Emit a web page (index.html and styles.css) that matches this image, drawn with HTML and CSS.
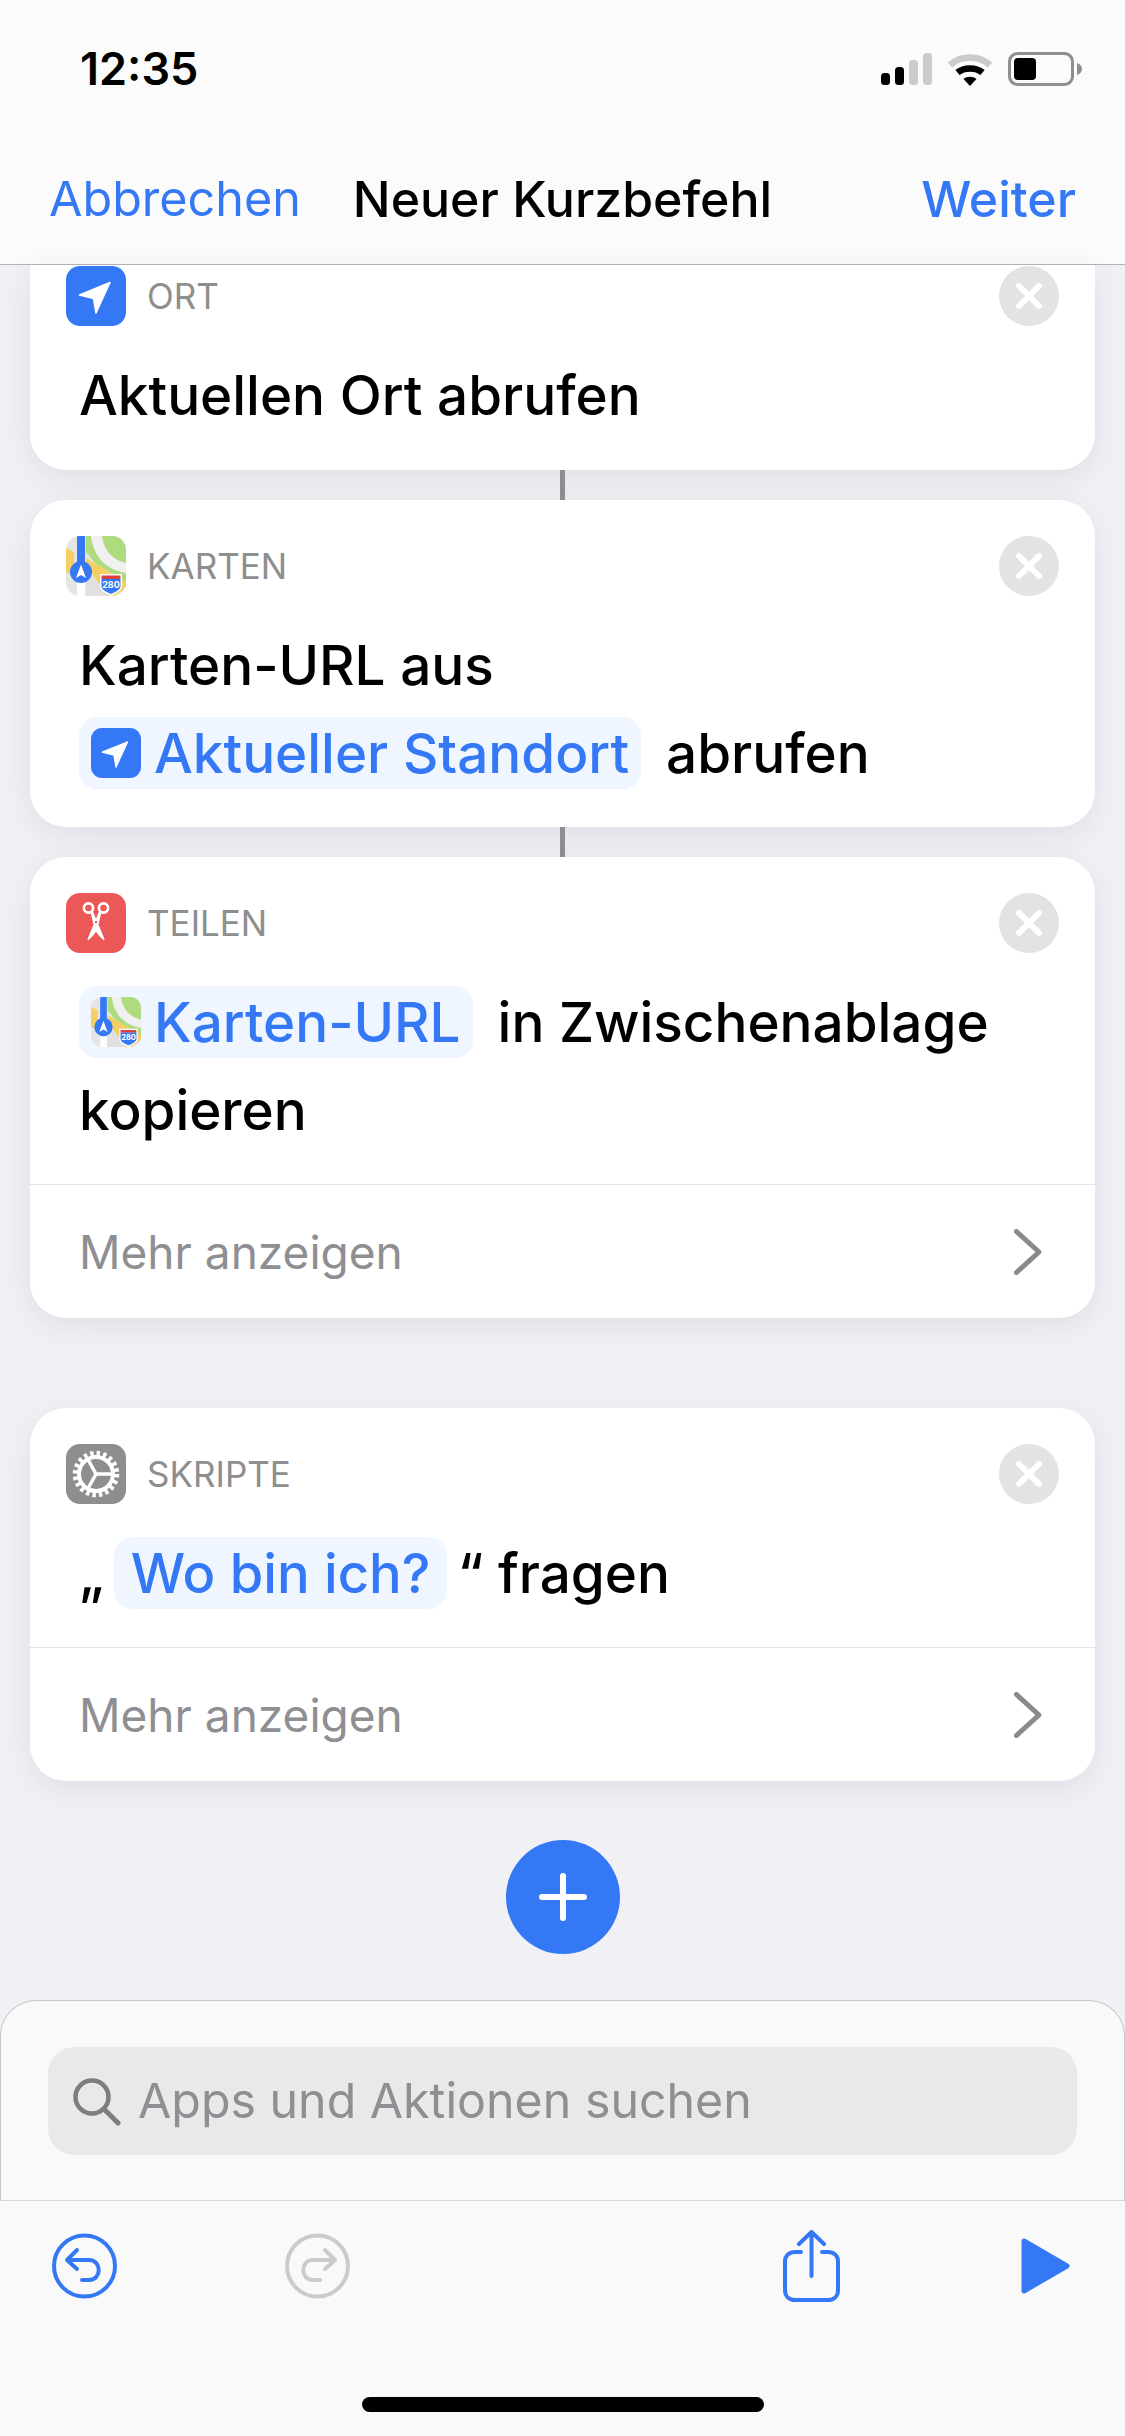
FILE: index.html
```html
<!DOCTYPE html>
<html lang="de">
<head>
<meta charset="utf-8" />
<title>Neuer Kurzbefehl</title>
<link rel="stylesheet" href="styles.css">
</head>
<body>

<svg class="defs" aria-hidden="true">
	<symbol id="i-location" viewBox="0 0 60 60">
		<path d="M44 16.5 13.5 29 27.5 32.5 30 47Z" fill="#fff" stroke="#fff" stroke-width="1.5" stroke-linejoin="round" />
	</symbol>
	<symbol id="i-maps" viewBox="0 0 60 60">
		<rect width="60" height="60" fill="#e5e5e5" />
		<path d="M20 0H60V46L20 22Z" fill="#aedb7d" />
		<path d="M36 0C38 14 46 24 60 27V37C40 34 27 20 25 0Z" fill="#f0f0f0" />
		<path d="M0 14 20 26 48 60H60V48L44 48 22 18 0 6Z" fill="#e5e5e5" />
		<path d="M0 12 8 16V40L0 36Z" fill="#f6cf63" />
		<path d="M20 22 60 46V52L48 60H42L20 30Z" fill="#f6cf63" />
		<path d="M20 30 42 60H20Z" fill="#e0e0e0" />
		<rect x="11" y="30" width="8" height="30" fill="#fff" />
		<rect x="11" y="0" width="8" height="32" fill="#3478f6" />
		<circle cx="15" cy="36" r="11" fill="#3478f6" />
		<path d="M15 28.5 20 42 15 39 10 42Z" fill="#fff" />
		<path d="M34 38H56V50C56 55 50 57 45 60 40 57 34 55 34 50Z" fill="#fff" />
		<path d="M35.5 39.5H54.5V43H35.5Z" fill="#d9433f" />
		<path d="M35.5 43H54.5V50C54.5 54 49 56 45 58 41 56 35.5 54 35.5 50Z" fill="#3478f6" />
	</symbol>
	<symbol id="i-scissors" viewBox="0 0 60 60">
		<g fill="none" stroke="#fff" stroke-width="2.6">
			<circle cx="22.5" cy="15" r="4.6" />
			<circle cx="37.5" cy="15" r="4.6" />
		</g>
		<path d="M24.500 19.500 27 18.500 38.500 46 38 47.500C34 44 31 41 29 37Z" fill="#fff" />
		<path d="M35.500 19.500 33 18.500 21.500 46 22 47.500C26 44 29 41 31 37Z" fill="#fff" />
		<circle cx="30" cy="29" r="1.2" fill="#ec5858" />
	</symbol>
	<symbol id="i-gear" viewBox="0 0 60 60">
		<g fill="none" stroke="#fff">
			<circle cx="30" cy="30" r="20.5" stroke-width="5.5" stroke-dasharray="3.4 3.04" />
			<circle cx="30" cy="30" r="17" stroke-width="4" />
			<path d="M30 30H47M30 30 22 15.500M30 30 22 44.500" stroke-width="3.5" />
		</g>
	</symbol>
	<symbol id="i-close" viewBox="0 0 60 60">
		<circle cx="30" cy="30" r="30" fill="#e3e3e6" />
		<path d="M20 20 40 40M40 20 20 40" fill="none" stroke="#fff" stroke-width="6" stroke-linecap="round" />
	</symbol>
	<symbol id="i-chevron" viewBox="0 0 28 46">
		<path d="M2.5 2.5 25 23 2.5 43.5" fill="none" stroke="#8a8a8e" stroke-width="5" stroke-linecap="round" stroke-linejoin="round" />
	</symbol>
</svg>

<div class="phone">

	<header class="topbar">
		<div class="status">
			<span class="clock">12:35</span>
			<div class="status_icons">
				<svg class="st_signal" width="51" height="32" viewBox="0 0 51 32">
					<rect x="0" y="20" width="9" height="12" rx="3.5" fill="#000" />
					<rect x="14" y="14" width="9" height="18" rx="3.5" fill="#000" />
					<rect x="28" y="7" width="9" height="25" rx="3.5" fill="#cbcbcb" />
					<rect x="42" y="0" width="9" height="32" rx="3.5" fill="#cbcbcb" />
				</svg>
				<svg class="st_wifi" width="46" height="33" viewBox="0 0 46 33">
					<path d="M3 12C14 2 32 2 43 12" fill="none" stroke="#cbcbcb" stroke-width="6.5" />
					<path d="M10.5 19.5C17 14 29 14 35.5 19.5" fill="none" stroke="#000" stroke-width="6.5" />
					<path d="M16.5 26C20 23 26 23 29.500 26L23 33Z" fill="#000" />
				</svg>
				<svg class="st_battery" width="74" height="34" viewBox="0 0 74 34">
					<rect x="1.500" y="1.500" width="63" height="31" rx="8" fill="none" stroke="#8e8e8e" stroke-width="3" />
					<rect x="6" y="6" width="22" height="22" rx="4" fill="#000" />
					<path d="M69 11C72 12 74 14 74 17 74 20 72 22 69 23Z" fill="#8e8e8e" />
				</svg>
			</div>
		</div>
		<nav class="navrow">
			<a class="nav_left">Abbrechen</a>
			<span class="nav_title">Neuer Kurzbefehl</span>
			<a class="nav_right">Weiter</a>
		</nav>
	</header>

	<main class="actions">

		<section class="card card_clipped">
			<div class="card_head">
				<svg class="app_icon icon_blue"><use href="#i-location" /></svg>
				<span class="card_label">ORT</span>
				<svg class="close_btn"><use href="#i-close" /></svg>
			</div>
			<div class="card_body body_roomy">
				<div class="line"><span>Aktuellen Ort abrufen</span></div>
			</div>
		</section>

		<div class="connector"></div>

		<section class="card">
			<div class="card_head">
				<svg class="app_icon" viewBox="0 0 60 60">
					<use href="#i-maps" />
					<text class="shield_text" x="45" y="51.5">280</text>
				</svg>
				<span class="card_label">KARTEN</span>
				<svg class="close_btn"><use href="#i-close" /></svg>
			</div>
			<div class="card_body">
				<div class="line"><span>Karten-URL aus</span></div>
				<div class="line">
					<span class="token">
						<svg class="token_icon icon_blue"><use href="#i-location" /></svg>
						Aktueller Standort
					</span>
					<span>abrufen</span>
				</div>
			</div>
		</section>

		<div class="connector"></div>

		<section class="card">
			<div class="card_head">
				<svg class="app_icon icon_red"><use href="#i-scissors" /></svg>
				<span class="card_label">TEILEN</span>
				<svg class="close_btn"><use href="#i-close" /></svg>
			</div>
			<div class="card_body">
				<div class="line">
					<span class="token">
						<svg class="token_icon" viewBox="0 0 60 60">
							<use href="#i-maps" />
							<text class="shield_text" x="45" y="51.5">280</text>
						</svg>
						Karten-URL
					</span>
					<span>in Zwischenablage</span>
				</div>
				<div class="line"><span>kopieren</span></div>
			</div>
			<div class="card_more">
				<span>Mehr anzeigen</span>
				<svg class="chevron"><use href="#i-chevron" /></svg>
			</div>
		</section>

		<section class="card card_apart">
			<div class="card_head">
				<svg class="app_icon icon_gray"><use href="#i-gear" /></svg>
				<span class="card_label">SKRIPTE</span>
				<svg class="close_btn"><use href="#i-close" /></svg>
			</div>
			<div class="card_body">
				<div class="line line_tight">
					<span>„</span>
					<span class="token token_plain">Wo bin ich?</span>
					<span>“ fragen</span>
				</div>
			</div>
			<div class="card_more">
				<span>Mehr anzeigen</span>
				<svg class="chevron"><use href="#i-chevron" /></svg>
			</div>
		</section>

		<button class="add_btn" aria-label="Hinzufügen">
			<svg width="52" height="52" viewBox="0 0 52 52">
				<path d="M26 5V47M5 26H47" fill="none" stroke="#fff" stroke-width="6" stroke-linecap="round" />
			</svg>
		</button>

	</main>

	<section class="search_panel">
		<div class="search_field">
			<svg width="50" height="50" viewBox="0 0 50 50">
				<circle cx="21" cy="21" r="16.5" fill="none" stroke="#7d7d82" stroke-width="4.5" />
				<path d="M33 33 47 47" fill="none" stroke="#7d7d82" stroke-width="5" stroke-linecap="round" />
			</svg>
			<span>Apps und Aktionen suchen</span>
		</div>
	</section>

	<footer class="toolbar">
		<div class="tool_row">
			<svg class="tool_undo" width="65" height="72" viewBox="0 0 65 72">
				<g fill="none" stroke="#3478f6" stroke-linecap="round" stroke-linejoin="round">
					<circle cx="32.500" cy="36" r="30.500" stroke-width="4" />
					<path d="M25 20 15 30 25 39M15 30H37C50 30 50 50 37 50H30" stroke-width="4" />
				</g>
			</svg>
			<svg class="tool_redo" width="65" height="72" viewBox="0 0 65 72">
				<g fill="none" stroke="#cbcbcb" stroke-linecap="round" stroke-linejoin="round">
					<circle cx="32.500" cy="36" r="30.500" stroke-width="4" />
					<path d="M40 20 50 30 40 39M50 30H28C15 30 15 50 28 50H35" stroke-width="4" />
				</g>
			</svg>
			<svg class="tool_share" width="57" height="72" viewBox="0 0 57 72">
				<g fill="none" stroke="#3478f6" stroke-linecap="round" stroke-linejoin="round" stroke-width="4">
					<path d="M18 22H12C6 22 2 26 2 31V60C2 66 6 70 12 70H45C51 70 55 66 55 60V31C55 26 51 22 45 22H39" />
					<path d="M28.500 46V3M16 14 28.500 2 41 14" />
				</g>
			</svg>
			<svg class="tool_play" width="49" height="56" viewBox="0 0 49 56">
				<path d="M3 3 46 28 3 53Z" fill="#3478f6" stroke="#3478f6" stroke-width="5" stroke-linejoin="round" />
			</svg>
		</div>
		<div class="home_bar"></div>
	</footer>

</div>

</body>
</html>
```

FILE: styles.css
```css
:root {
	--blue       : #3478f6;
	--label-gray : #8e8e93;
	--page-bg    : #f0f0f5;
	--bar-bg     : #f9f9fa;
}
* {
	box-sizing : border-box;
}
body {
	margin      : 0;
	background  : var(--page-bg);
	font-family : Inter, "Liberation Sans", sans-serif;
	color       : #000;
}
.defs {
	position : absolute;
	width    : 0;
	height   : 0;
}
.phone {
	display        : flex;
	flex-direction : column;
	width          : 1125px;
	height         : 2436px;
	overflow       : hidden;
}

/* top */
.topbar {
	flex          : 0 0 265px;
	background    : #fbfbfb;
	border-bottom : 1px solid #b4b4b6;
}
.status {
	display         : flex;
	justify-content : space-between;
	align-items     : flex-start;
	padding         : 46px 43px 0 80px;
}
.clock {
	font-size   : 45px;
	font-weight : 600;
	line-height : 46px;
}
.status_icons {
	display     : flex;
	align-items : center;
	gap         : 15px;
	padding-top : 6px;
}
.navrow {
	display               : grid;
	grid-template-columns : 1fr auto 1fr;
	align-items           : center;
	padding               : 77px 49px 0 49px;
	font-size             : 48.5px;
	line-height           : 60px;
}
.nav_left, .nav_right {
	color : var(--blue);
}
.nav_right {
	text-align  : right;
	font-size   : 50px;
	font-weight : 500;
}
.nav_title {
	font-size   : 50px;
	font-weight : 500;
}

/* cards */
.actions {
	flex           : 1 1 auto;
	display        : flex;
	flex-direction : column;
	min-height     : 0;
	padding        : 0 30px;
}
.card {
	background    : #fff;
	border-radius : 36px;
	box-shadow    : 0 8px 30px rgba(60, 60, 80, 0.09);
	padding-top   : 36px;
}
.card_clipped {
	padding-top   : 1px;
	border-radius : 0 0 36px 36px;
}
.card_apart {
	margin-top : 90px;
}
.card_head {
	display     : flex;
	align-items : center;
	padding     : 0 36px;
}
.app_icon {
	width         : 60px;
	height        : 60px;
	border-radius : 14px;
	flex          : none;
}
.icon_blue { background : var(--blue); }
.icon_red  { background : #ec5858; }
.icon_gray { background : #8e8e8e; }
.card_label {
	margin-left : 21px;
	font-size   : 35px;
	color       : #8e8e8e;
}
.close_btn {
	width       : 60px;
	height      : 60px;
	margin-left : auto;
}
.card_body {
	padding : 25px 36px 30px 49px;
}
.body_roomy {
	padding-bottom : 31px;
}
.line {
	display     : flex;
	align-items : center;
	gap         : 25px;
	height      : 88px;
	font-size   : 54.8px;
	font-weight : 450;
	white-space : nowrap;
}
.line_tight {
	gap : 10px;
}
.token {
	display       : flex;
	align-items   : center;
	gap           : 13px;
	height        : 72px;
	padding       : 0 12px;
	border-radius : 18px;
	background    : #f0f6ff;
	color         : var(--blue);
}
.token_plain {
	padding   : 0 17px;
	font-size : 54.3px;
}
.token_icon {
	width         : 50px;
	height        : 50px;
	border-radius : 11px;
	flex          : none;
}
.card_more {
	display         : flex;
	align-items     : center;
	justify-content : space-between;
	height          : 134px;
	padding         : 0 53px 0 49px;
	border-top      : 1px solid #e3e3e5;
	font-size       : 46px;
	color           : var(--label-gray);
}
.chevron {
	width  : 28px;
	height : 46px;
}
.connector {
	flex       : 0 0 30px;
	width      : 5px;
	align-self : center;
	background : #8e8e93;
}
.add_btn {
	align-self      : center;
	display         : flex;
	align-items     : center;
	justify-content : center;
	flex            : none;
	width           : 114px;
	height          : 114px;
	margin-top      : 59px;
	padding         : 0;
	border          : 0;
	border-radius   : 50%;
	background      : var(--blue);
}
.shield_text {
	font-size   : 9px;
	font-weight : 700;
	fill        : #fff;
	text-anchor : middle;
}

/* search panel */
.search_panel {
	flex          : 0 0 201px;
	padding       : 46px 47px 0 47px;
	background    : #f9f9f9;
	border        : 1px solid #c8c8ca;
	border-bottom : 1px solid #d8d8da;
	border-radius : 36px 36px 0 0;
}
.search_field {
	display       : flex;
	align-items   : center;
	gap           : 17px;
	height        : 108px;
	padding-left  : 23px;
	background    : #e9e9ea;
	border-radius : 26px;
	font-size     : 48.3px;
	color         : var(--label-gray);
}
.search_field span {
	margin-top : -2px;
}

/* bottom */
.toolbar {
	flex           : 0 0 235px;
	display        : flex;
	flex-direction : column;
	background     : var(--bar-bg);
}
.tool_row {
	display      : flex;
	align-items  : center;
	height       : 72px;
	margin-top   : 29px;
	padding-left : 52px;
}
.tool_redo  { margin-left : 168px; }
.tool_share { margin-left : 433px; }
.tool_play  { margin-left : 181px; }
.home_bar {
	align-self    : center;
	width         : 402px;
	height        : 15px;
	margin-top    : 95px;
	border-radius : 8px;
	background    : #000;
}
```
